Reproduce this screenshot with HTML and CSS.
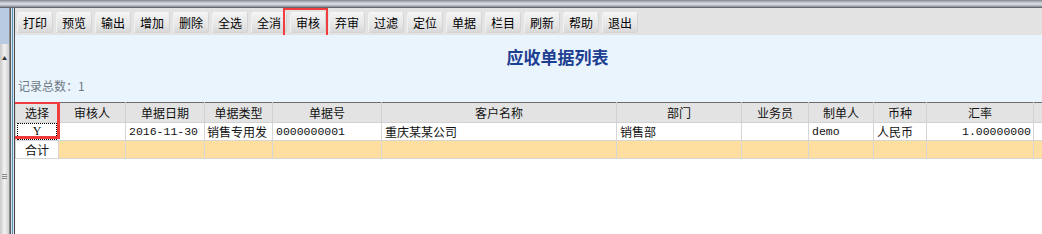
FILE: index.html
```html
<!DOCTYPE html>
<html lang="zh">
<head>
<meta charset="utf-8">
<link rel="stylesheet" href="styles.css">
</head>
<body>
<div class="topbar"></div>
<div class="frame">
  <div class="side">
    <div class="side-top"></div>
    <div class="side-scroll">
      <div class="arrow">▲</div>
      <div class="grip"><i></i><i></i><i></i></div>
    </div>
  </div>
  <div class="edge"></div>
  <div class="main">
    <div class="toolbar">
      <span class="btn">打印</span>
      <span class="btn">预览</span>
      <span class="btn">输出</span>
      <span class="btn">增加</span>
      <span class="btn">删除</span>
      <span class="btn">全选</span>
      <span class="btn">全消</span>
      <span class="btn marked">审核</span>
      <span class="btn">弃审</span>
      <span class="btn">过滤</span>
      <span class="btn">定位</span>
      <span class="btn">单据</span>
      <span class="btn">栏目</span>
      <span class="btn">刷新</span>
      <span class="btn">帮助</span>
      <span class="btn">退出</span>
    </div>
    <div class="head">
      <div class="title">应收单据列表</div>
      <div class="count">记录总数：1</div>
    </div>
    <div class="grid">
      <table>
        <colgroup>
          <col class="c1"><col class="c2"><col class="c3"><col class="c4"><col class="c5"><col class="c6"><col class="c7"><col class="c8"><col class="c9"><col class="c10"><col class="c11"><col class="c12">
        </colgroup>
        <thead>
          <tr>
            <th class="sel">选择</th><th>审核人</th><th>单据日期</th><th>单据类型</th><th>单据号</th><th>客户名称</th><th>部门</th><th>业务员</th><th>制单人</th><th>币种</th><th>汇率</th><th></th>
          </tr>
        </thead>
        <tbody>
          <tr class="data">
            <td class="ctr"><span class="focus">Y</span></td><td></td><td class="mono">2016-11-30</td><td class="clip">销售专用发</td><td class="mono">0000000001</td><td>重庆某某公司</td><td>销售部</td><td></td><td class="mono">demo</td><td>人民币</td><td class="mono right">1.00000000</td><td></td>
          </tr>
          <tr class="sum">
            <td class="ctr first">合计</td><td></td><td></td><td></td><td></td><td></td><td></td><td></td><td></td><td></td><td></td><td></td>
          </tr>
        </tbody>
      </table>
      <div class="redbox"></div>
    </div>
  </div>
</div>
</body>
</html>
```

FILE: styles.css
```css
html, body {
  margin: 0;
  padding: 0;
}
body {
  width: 1042px;
  height: 234px;
  overflow: hidden;
  background: #ffffff;
  font-family: "Noto Sans CJK SC", "DejaVu Sans", sans-serif;
  font-size: 12px;
  color: #000;
}
.topbar {
  height: 8px;
  background: linear-gradient(#7f838b 0, #b8bcc4 2px, #dfe2e8 4px, #a9adb5 6px, #4e5258 8px);
}
.frame {
  display: flex;
  height: 226px;
}
.side {
  width: 9px;
  display: flex;
  flex-direction: column;
}
.side-top {
  height: 36px;
  background: #b8cbe3;
}
.side-scroll {
  flex: 1;
  background: linear-gradient(to right, #c9c9c9, #f2f2f2 50%, #d0d0d0);
  position: relative;
  display: flex;
  flex-direction: column;
  align-items: center;
}
.arrow {
  font-size: 5px;
  line-height: 8px;
  margin-top: 10px;
  color: #333;
}
.grip {
  margin-top: 112px;
  display: flex;
  flex-direction: column;
  gap: 1px;
}
.grip i {
  display: block;
  width: 5px;
  height: 1px;
  background: #888;
}
.edge {
  width: 6px;
  background: linear-gradient(to right, #8e8e8e 0, #8e8e8e 1px, #5a5a5a 1px, #5a5a5a 2px, #d8e4ee 2px, #d8e4ee 3px, #5a92b4 3px, #5a92b4 4px, #d8e4ee 4px, #d8e4ee 5px, #4a4a4a 5px);
}
.main {
  flex: 1;
  display: flex;
  flex-direction: column;
  min-width: 0;
}
.toolbar {
  height: 27px;
  background: #e3e3e3;
  display: flex;
  align-items: flex-end;
  gap: 3px;
  padding: 0 0 2px 2px;
  box-sizing: border-box;
}
.btn {
  position: relative;
  width: 36px;
  height: 21px;
  box-sizing: border-box;
  border-radius: 3px;
  background: linear-gradient(#f3f3f3, #e6e6e6 60%, #d9d9d9);
  border: 1px solid #d4d4d4;
  border-top-color: #f8f8f8;
  border-left-color: #f2f2f2;
  display: flex;
  align-items: center;
  justify-content: center;
  font-size: 12px;
  line-height: 1;
  color: #000;
}
.marked::after {
  content: "";
  position: absolute;
  left: -8px;
  top: -5px;
  right: -3px;
  bottom: -6px;
  border: 2px solid #f03c3c;
}
.head {
  height: 67px;
  background: #eaf4fd;
  position: relative;
  display: flex;
  flex-direction: column;
}
.title {
  text-align: center;
  font-size: 17px;
  font-weight: bold;
  color: #1d3f92;
  margin-top: 11px;
  line-height: 22px;
  padding-left: 58px;
}
.count {
  color: #6e7a86;
  font-size: 12px;
  line-height: 16px;
  margin-top: 10px;
  padding-left: 3px;
}
.grid {
  position: relative;
  flex: 1;
  overflow: hidden;
}
table {
  border-collapse: collapse;
  table-layout: fixed;
  width: 1080px;
}
col.c1 { width: 43px; }
col.c2 { width: 67px; }
col.c3 { width: 79px; }
col.c4 { width: 68px; }
col.c5 { width: 109px; }
col.c6 { width: 235px; }
col.c7 { width: 125px; }
col.c8 { width: 67px; }
col.c9 { width: 65px; }
col.c10 { width: 53px; }
col.c11 { width: 107px; }
col.c12 { width: 62px; }
th {
  height: 19px;
  background: #e3e3e3;
  border: 1px solid #d2d2d2;
  border-top: 1px solid #6c6c6c;
  font-weight: normal;
  font-size: 12px;
  padding: 0;
  line-height: 18px;
  text-align: center;
  color: #111;
}
td {
  height: 17px;
  border: 1px solid #d6d6d6;
  padding: 0 2px 0 3px;
  font-size: 12px;
  line-height: 16px;
  white-space: nowrap;
  overflow: hidden;
  color: #111;
}
.mono {
  font-family: "Liberation Mono", "DejaVu Sans Mono", monospace;
  font-size: 11.5px;
}
.right { text-align: right; }
.ctr { text-align: center; padding: 0; }
.clip { text-overflow: clip; padding-left: 2px; }
.data td { background: #ffffff; }
.sum td { background: #ffdf9f; }
.sum td.first { background: #ffffff; }
.focus {
  display: block;
  margin: 0 1px;
  height: 15px;
  border: 1px dotted #000;
  font-family: "Liberation Serif", serif;
  line-height: 15px;
}
.redbox {
  position: absolute;
  left: -6px;
  top: -1px;
  width: 51px;
  height: 38px;
  box-sizing: border-box;
  border: 3px solid #f03c3c;
}
```
